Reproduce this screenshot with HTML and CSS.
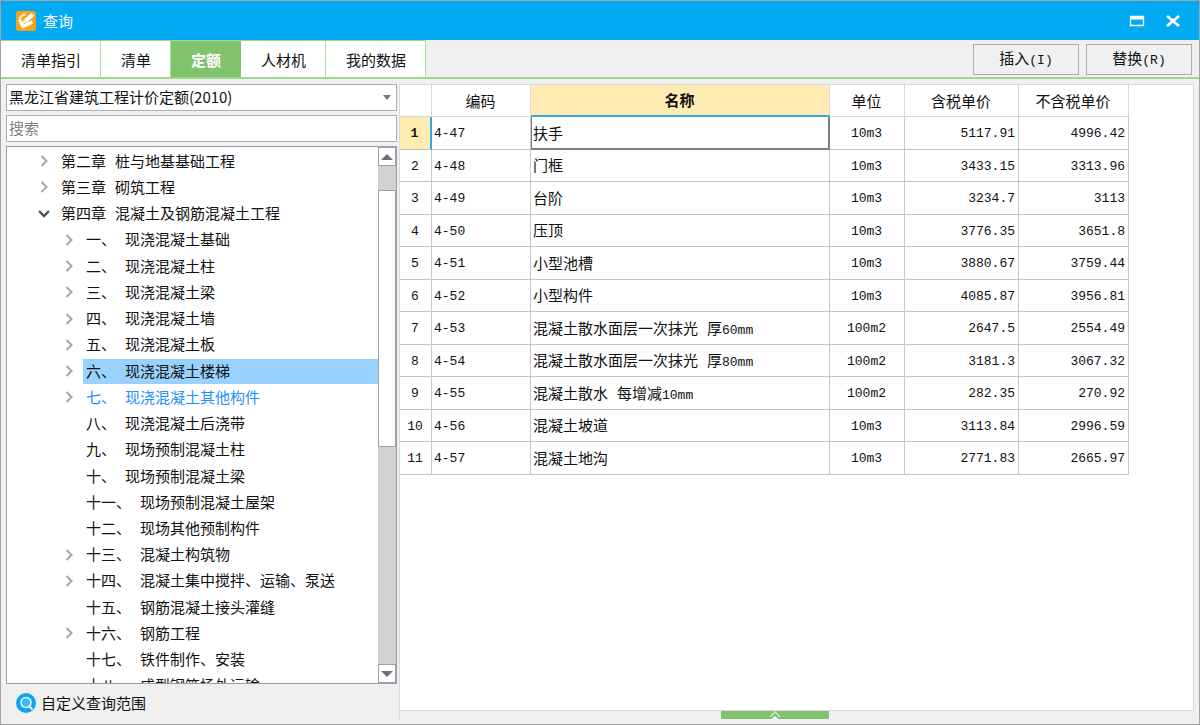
FILE: index.html
```html
<!DOCTYPE html>
<html lang="zh-CN">
<head>
<meta charset="utf-8">
<title>查询</title>
<link rel="stylesheet" href="styles.css">
</head>
<body>
<svg class="defs" aria-hidden="true">
  <symbol id="right" viewBox="0 0 16 16"><path d="M5.500 3l5 5-5 5" fill="none" stroke="#a6a6a6" stroke-width="2"/></symbol>
  <symbol id="down" viewBox="0 0 16 16"><path d="M3 5l5 5 5-5" fill="none" stroke="#505050" stroke-width="2.4"/></symbol>
</svg>
<div class="window">
  <header class="titlebar">
    <svg class="app-icon" viewBox="0 0 20 20" aria-hidden="true">
      <rect width="20" height="20" rx="3" fill="#f9a11b"/>
      <path d="M9.500 3.500H7.500L3 7.500" fill="none" stroke="#fff3dc" stroke-width="2"/>
      <path d="M15.500 2l3 2.500-8 7.500-3.500.5.500-3.500z" fill="#fff"/>
      <path d="M3.500 8.500l3.500 7 9.500-4.500" fill="none" stroke="#fff" stroke-width="3.400"/>
      <path d="M7.500 9l3 2.800" stroke="#f9b84e" stroke-width="1"/>
    </svg>
    <h1 class="title">查询</h1>
    <button class="win-btn" aria-label="最大化"><svg viewBox="0 0 16 14" width="16" height="14"><path d="M1.500 2.500h13v9h-13z" fill="none" stroke="#fff" stroke-width="1.300"/><path d="M1 2h14v3.500H1z" fill="#fff"/></svg></button>
    <button class="win-btn" aria-label="关闭"><svg viewBox="0 0 16 14" width="16" height="14"><path d="M2 2l12 10M14 2l-12 10" stroke="#fff" stroke-width="2.800"/></svg></button>
  </header>

  <div class="toolbar">
    <nav class="tabs" role="tablist">
      <button class="tab" role="tab">清单指引</button>
      <button class="tab" role="tab">清单</button>
      <button class="tab active" role="tab" aria-selected="true">定额</button>
      <button class="tab" role="tab">人材机</button>
      <button class="tab" role="tab">我的数据</button>
    </nav>
    <div class="actions">
      <button class="action">插入<span class="num">(I)</span></button>
      <button class="action">替换<span class="num">(R)</span></button>
    </div>
  </div>

  <main class="body">
    <aside class="side">
      <div class="combo">
        <select class="field" aria-label="定额库"><option>黑龙江省建筑工程计价定额(2010)</option></select>
        <svg class="combo-arrow" viewBox="0 0 8 5" aria-hidden="true"><path d="M0 0h8L4 5z" fill="#74777c"/></svg>
      </div>
      <input class="field" type="text" placeholder="搜索" aria-label="搜索">
      <div class="tree-box">
        <div class="tree-view">
          <ul class="tree" role="tree">
            <li class="node chapter"><button class="toggle" aria-label="展开"><svg><use href="#right"/></svg></button><span class="label">第二章 桩与地基基础工程</span></li>
            <li class="node chapter"><button class="toggle" aria-label="展开"><svg><use href="#right"/></svg></button><span class="label">第三章 砌筑工程</span></li>
            <li class="node chapter"><button class="toggle" aria-label="收起"><svg><use href="#down"/></svg></button><span class="label">第四章 混凝土及钢筋混凝土工程</span></li>
            <li class="node"><button class="toggle" aria-label="展开"><svg><use href="#right"/></svg></button><span class="label">一、 现浇混凝土基础</span></li>
            <li class="node"><button class="toggle" aria-label="展开"><svg><use href="#right"/></svg></button><span class="label">二、 现浇混凝土柱</span></li>
            <li class="node"><button class="toggle" aria-label="展开"><svg><use href="#right"/></svg></button><span class="label">三、 现浇混凝土梁</span></li>
            <li class="node"><button class="toggle" aria-label="展开"><svg><use href="#right"/></svg></button><span class="label">四、 现浇混凝土墙</span></li>
            <li class="node"><button class="toggle" aria-label="展开"><svg><use href="#right"/></svg></button><span class="label">五、 现浇混凝土板</span></li>
            <li class="node selected"><button class="toggle" aria-label="展开"><svg><use href="#right"/></svg></button><span class="label">六、 现浇混凝土楼梯</span></li>
            <li class="node current"><button class="toggle" aria-label="展开"><svg><use href="#right"/></svg></button><span class="label">七、 现浇混凝土其他构件</span></li>
            <li class="node leaf"><span class="label">八、 现浇混凝土后浇带</span></li>
            <li class="node leaf"><span class="label">九、 现场预制混凝土柱</span></li>
            <li class="node leaf"><span class="label">十、 现场预制混凝土梁</span></li>
            <li class="node leaf"><span class="label">十一、 现场预制混凝土屋架</span></li>
            <li class="node leaf"><span class="label">十二、 现场其他预制构件</span></li>
            <li class="node"><button class="toggle" aria-label="展开"><svg><use href="#right"/></svg></button><span class="label">十三、 混凝土构筑物</span></li>
            <li class="node"><button class="toggle" aria-label="展开"><svg><use href="#right"/></svg></button><span class="label">十四、 混凝土集中搅拌、运输、泵送</span></li>
            <li class="node leaf"><span class="label">十五、 钢筋混凝土接头灌缝</span></li>
            <li class="node"><button class="toggle" aria-label="展开"><svg><use href="#right"/></svg></button><span class="label">十六、 钢筋工程</span></li>
            <li class="node leaf"><span class="label">十七、 铁件制作、安装</span></li>
            <li class="node leaf"><span class="label">十八、 成型钢筋场外运输</span></li>
          </ul>
        </div>
        <div class="scrollbar">
          <button class="scroll-btn" aria-label="向上滚动"><svg viewBox="0 0 12 6" width="12" height="6"><path d="M0 6h12L6 0z" fill="#6b7080"/></svg></button>
          <div class="thumb"></div>
          <button class="scroll-btn" aria-label="向下滚动"><svg viewBox="0 0 12 6" width="12" height="6"><path d="M0 0h12L6 6z" fill="#6b7080"/></svg></button>
        </div>
      </div>
      <button class="scope">
        <svg class="scope-icon" viewBox="0 0 20 20" aria-hidden="true"><circle cx="10" cy="10" r="10" fill="#0ea5ee"/><circle cx="10" cy="9.500" r="5" fill="#3db8f4" stroke="#e6f6fe" stroke-width="1.600"/><path d="M13 13l3.500 3.500" stroke="#e6f6fe" stroke-width="2"/></svg>
        自定义查询范围
      </button>
    </aside>

    <section class="content">
      <div class="grid-box">
        <table class="grid">
          <colgroup><col class="c-index"><col class="c-code"><col class="c-name"><col class="c-unit"><col class="c-price"><col class="c-net"></colgroup>
          <thead>
            <tr><th></th><th>编码</th><th class="sorted">名称</th><th>单位</th><th>含税单价</th><th>不含税单价</th></tr>
          </thead>
          <tbody>
            <tr class="active-row"><th>1</th><td>4-47</td><td class="name focus">扶手</td><td>10m3</td><td>5117.91</td><td>4996.42</td></tr>
            <tr><th>2</th><td>4-48</td><td class="name">门框</td><td>10m3</td><td>3433.15</td><td>3313.96</td></tr>
            <tr><th>3</th><td>4-49</td><td class="name">台阶</td><td>10m3</td><td>3234.7</td><td>3113</td></tr>
            <tr><th>4</th><td>4-50</td><td class="name">压顶</td><td>10m3</td><td>3776.35</td><td>3651.8</td></tr>
            <tr><th>5</th><td>4-51</td><td class="name">小型池槽</td><td>10m3</td><td>3880.67</td><td>3759.44</td></tr>
            <tr><th>6</th><td>4-52</td><td class="name">小型构件</td><td>10m3</td><td>4085.87</td><td>3956.81</td></tr>
            <tr><th>7</th><td>4-53</td><td class="name">混凝土散水面层一次抹光 厚<span class="num">60mm</span></td><td>100m2</td><td>2647.5</td><td>2554.49</td></tr>
            <tr><th>8</th><td>4-54</td><td class="name">混凝土散水面层一次抹光 厚<span class="num">80mm</span></td><td>100m2</td><td>3181.3</td><td>3067.32</td></tr>
            <tr><th>9</th><td>4-55</td><td class="name">混凝土散水 每增减<span class="num">10mm</span></td><td>100m2</td><td>282.35</td><td>270.92</td></tr>
            <tr><th>10</th><td>4-56</td><td class="name">混凝土坡道</td><td>10m3</td><td>3113.84</td><td>2996.59</td></tr>
            <tr><th>11</th><td>4-57</td><td class="name">混凝土地沟</td><td>10m3</td><td>2771.83</td><td>2665.97</td></tr>
          </tbody>
        </table>
      </div>
      <div class="drawer">
        <button class="handle" aria-label="展开面板"><svg viewBox="0 0 12 8" width="12" height="8"><path d="M1 6l5-5 5 5" fill="none" stroke="#c9e8bf" stroke-width="1.500"/><path d="M3 8l3-3 3 3z" fill="#fff"/></svg></button>
      </div>
    </section>
  </main>
</div>
</body>
</html>
```

FILE: styles.css
```css
* { box-sizing: border-box; }

body {
  margin: 0;
  font: 15px/20px "Noto Sans CJK SC", sans-serif;
  color: #111;
}

button, input, select {
  margin: 0;
  padding: 0;
  border: 0;
  border-radius: 0;
  background: none;
  font: inherit;
  color: inherit;
}

svg { display: block; }
.defs { display: none; }
.num { font-family: "Liberation Mono", monospace; font-size: 13px; }

.window {
  display: flex;
  flex-direction: column;
  height: 100vh;
  border: 1px solid #a3a3a3;
  background: #f0f0f0;
}

/* Title bar */
.titlebar {
  display: flex;
  align-items: center;
  flex: none;
  height: 39px;
  padding: 0 12px 0 15px;
  background: #02a9f3;
  color: #fff;
}
.app-icon { width: 20px; height: 20px; }
.title {
  flex: 1;
  margin: 0 0 0 7px;
  font-size: 15px;
  font-weight: 400;
}
.win-btn {
  display: grid;
  place-items: center;
  width: 36px;
  height: 32px;
}
.win-btn:last-child { width: 28px; margin-left: 4px; }

/* Tabs and actions */
.toolbar {
  display: flex;
  justify-content: space-between;
  flex: none;
  height: 39px;
  border-bottom: 2px solid #a0d890;
}
.tabs {
  display: flex;
  border-top: 1px solid #a0d890;
}
.tab {
  padding: 2px 19px 0 20px;
  border-right: 1px solid #a9dd9b;
  background: #fff;
}
.tab.active {
  border-color: #80c36c;
  background: #80c36c;
  color: #fff;
  font-weight: 700;
}
.actions {
  display: flex;
  gap: 7px;
  padding: 4px 7px 2px 0;
}
.action {
  width: 106px;
  border: 1px solid #acacac;
}

/* Left panel */
.body {
  display: flex;
  flex: 1;
  min-height: 0;
  padding: 5px;
}
.side {
  display: flex;
  flex-direction: column;
  gap: 4px;
  width: 391px;
}
.combo { display: grid; align-items: center; }
.field {
  grid-area: 1 / 1;
  width: 100%;
  height: 27px;
  padding: 0 2px 2px;
  border: 1px solid #aaafb3;
  background: #fff;
  appearance: none;
  outline: 0;
}
.field::placeholder { color: #808080; opacity: 1; }
.combo-arrow {
  grid-area: 1 / 1;
  justify-self: end;
  width: 8px;
  height: 5px;
  margin-right: 6px;
  pointer-events: none;
}
.tree-box {
  display: flex;
  flex: 1;
  min-height: 0;
  border: 1px solid #989ea6;
  background: #fff;
}
.tree-view { flex: 1; overflow: hidden; }
.tree {
  display: grid;
  grid-auto-rows: 1fr;
  height: 103%;
  margin: 0;
  padding: 1px 0 0;
  font-family: "Liberation Mono", "Noto Sans CJK SC", monospace;
  list-style: none;
}
.node {
  display: flex;
  align-items: center;
  gap: 6px;
  min-height: 0;
  padding-left: 54px;
}
.node.chapter { padding-left: 29px; }
.node.leaf { padding-left: 76px; }
.toggle, .toggle svg { width: 16px; height: 16px; }
.label {
  flex: 1;
  padding: 5px 3px 0;
  white-space: nowrap;
}
.selected .label { background: #99d1ff; }
.current .label { color: #1e90ff; }

.scrollbar {
  display: grid;
  grid-template-rows: 19px 24fr 257fr 217fr 19px;
  width: 18px;
  background: #d2d2d2;
}
.scroll-btn {
  display: grid;
  place-items: center;
  border: 1px solid #a0a0a0;
  background: #fff;
}
.scroll-btn:last-child { grid-row: 5; }
.thumb {
  grid-row: 3;
  border: 1px solid #a0a0a0;
  background: #fff;
}
.scope {
  display: flex;
  align-items: center;
  gap: 5px;
  height: 31px;
  padding: 0 0 2px 10px;
}
.scope-icon { width: 20px; height: 20px; }

/* Price table */
.content {
  display: flex;
  flex-direction: column;
  flex: 1;
  min-width: 0;
  margin-left: 2px;
  border-left: 1px solid #dcdcdc;
}
.grid-box {
  flex: 1;
  border: 1px solid #d8d8d8;
  border-left: 0;
  background: #fff;
}
.grid {
  table-layout: fixed;
  width: 729px;
  border-spacing: 0;
  font-family: "Liberation Mono", "Noto Sans CJK SC", monospace;
}
.c-index { width: 32px; }
.c-code { width: 99px; }
.c-name { width: 299px; }
.c-unit { width: 75px; }
.c-price { width: 114px; }
.c-net { width: 110px; }
.grid tr { height: 32px; }
.grid tbody tr:nth-child(odd) { height: 33px; }
.grid th, .grid td {
  padding: 2px 3px 0 2px;
  border-right: 1px solid #c8c8c8;
  border-bottom: 1px solid #c4c4c4;
  font-size: 13px;
  font-weight: 400;
  text-align: right;
  white-space: nowrap;
}
.grid th { text-align: center; }
.grid thead th {
  padding-top: 0;
  border-color: #d8d8d8;
  font-family: "Noto Sans CJK SC", sans-serif;
  font-size: 15px;
}
.grid thead .sorted {
  border-bottom: 2px solid #37a8dc;
  background: #ffecb2;
  font-weight: 700;
}
.grid .active-row th {
  border-right: 2px solid #37a8dc;
  background: #ffecb2;
  font-weight: 700;
}
.grid td:nth-child(2) { text-align: left; }
.grid .name {
  padding-top: 5px;
  font-size: 15px;
  text-align: left;
}
.grid td:nth-child(4) { text-align: center; }
.grid .focus { box-shadow: inset 1px 0 #808080, inset -1px -1px #808080; border-color: #808080; }

.drawer {
  display: flex;
  justify-content: center;
  height: 8px;
  padding-right: 44px;
}
.handle {
  display: grid;
  place-items: center;
  width: 108px;
  background: #80c36c;
}
```
